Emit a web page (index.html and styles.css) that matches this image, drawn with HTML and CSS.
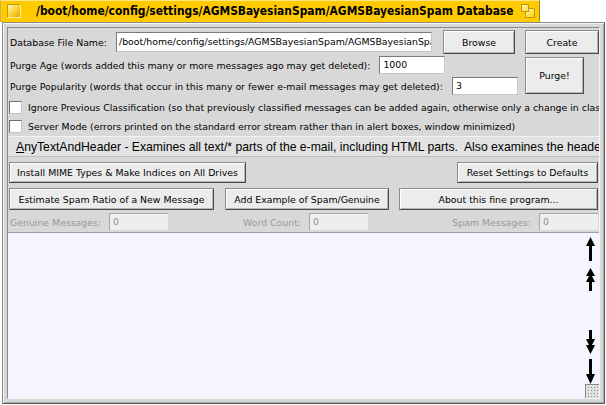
FILE: index.html
```html
<!DOCTYPE html>
<html>
<head>
<meta charset="utf-8">
<link rel="stylesheet" href="styles.css">
</head>
<body>
<div class="win">
  <div class="tab">
    <span class="close"></span>
    <span class="title">/boot/home/config/settings/AGMSBayesianSpam/AGMSBayesianSpam Database</span>
    <span class="zoom"><span class="zb"></span><span class="zs"></span></span>
  </div>
  <div class="frame">
    <div class="content">
      <div class="top">
        <div class="row r1">
          <span class="lbl">Database File Name:</span>
          <div class="tf path">/boot/home/config/settings/AGMSBayesianSpam/AGMSBayesianSpam Database</div>
          <div class="btn browse">Browse</div>
        </div>
        <div class="btn create">Create</div>
        <div class="row r2">
          <span class="lbl">Purge Age (words added this many or more messages ago may get deleted):</span>
          <div class="tf num">1000</div>
        </div>
        <div class="btn purge">Purge!</div>
        <div class="row r3">
          <span class="lbl">Purge Popularity (words that occur in this many or fewer e-mail messages may get deleted):</span>
          <div class="tf num">3</div>
        </div>
      </div>
      <div class="cb cb1"><span class="box"></span><span class="cbt">Ignore Previous Classification (so that previously classified messages can be added again, otherwise only a change in classification is allowed)</span></div>
      <div class="cb cb2"><span class="box"></span><span class="cbt">Server Mode (errors printed on the standard error stream rather than in alert boxes, window minimized)</span></div>
      <div class="menu"><span class="mtext"><u>A</u>nyTextAndHeader - Examines all text/* parts of the e-mail, including HTML parts.&nbsp; Also examines the headers.</span></div>
      <div class="brow b1">
        <div class="btn install">Install MIME Types &amp; Make Indices on All Drives</div>
        <div class="btn reset">Reset Settings to Defaults</div>
      </div>
      <div class="brow b2">
        <div class="btn estimate">Estimate Spam Ratio of a New Message</div>
        <div class="btn addex">Add Example of Spam/Genuine</div>
        <div class="btn about">About this fine program...</div>
      </div>
      <div class="stats">
        <div class="stat s1"><span class="slbl">Genuine Messages:</span><div class="tf dis">0</div></div>
        <div class="stat s2"><span class="slbl">Word Count:</span><div class="tf dis">0</div></div>
        <div class="stat s3"><span class="slbl">Spam Messages:</span><div class="tf dis">0</div></div>
      </div>
      <div class="textview">
        <div class="tvbody"></div>
        <div class="arrows">
          <svg class="a1" width="9" height="24" viewBox="0 0 9 24"><path d="M4.5 0 L9 9 L6 9 L6 24 L3 24 L3 9 L0 9 Z"/></svg>
          <svg class="a2" width="9" height="23" viewBox="0 0 9 23"><path d="M4.5 0 L9 8 L6 8 L9 14 L6 14 L6 23 L3 23 L3 14 L0 14 L3 8 L0 8 Z"/></svg>
          <svg class="a3" width="9" height="24" viewBox="0 0 9 24"><path d="M3 0 L6 0 L6 9 L9 9 L6 15 L9 15 L4.5 24 L0 15 L3 15 L0 9 L3 9 Z"/></svg>
          <svg class="a4" width="9" height="25" viewBox="0 0 9 25"><path d="M3 0 L6 0 L6 15 L9 15 L4.5 25 L0 15 L3 15 Z"/></svg>
          <div class="knob"></div>
        </div>
      </div>
    </div>
  </div>
</div>
</body>
</html>
```
FILE: styles.css
```css
* { box-sizing: border-box; }
body {
  margin: 0;
  background: #fff;
  font-family: "DejaVu Sans", sans-serif;
  font-size: 9.35px;
  color: #000;
}
.win { width: 606px; height: 405px; }

.tab {
  width: 540px;
  height: 22px;
  background: #ffcb00;
  border: 1px solid;
  border-color: #ffe680 #9a8030 #ffcb00 #c8b060;
  display: flex;
  align-items: center;
}
.close {
  flex: none;
  width: 14px;
  height: 14px;
  margin-left: 6px;
  border: 1px solid;
  border-color: #c09a00 #fff0a0 #fff0a0 #c09a00;
  background: linear-gradient(135deg, #fff6c0 0%, #ffd840 45%, #e0a800 100%);
}
.title {
  margin-left: 15px;
  font-family: "DejaVu Sans Condensed", "DejaVu Sans", sans-serif;
  font-stretch: condensed;
  font-weight: bold;
  font-size: 11.9px;
  white-space: nowrap;
  overflow: hidden;
  flex: 1;
}
.zoom {
  flex: none;
  position: relative;
  width: 14px;
  height: 14px;
  margin-right: 4px;
}
.zoom .zb {
  position: absolute;
  right: 0; bottom: 0;
  width: 10px; height: 10px;
  border: 1px solid #c09a00;
  background: linear-gradient(135deg, #fff6c0, #ffcb00);
}
.zoom .zs {
  position: absolute;
  left: 0; top: 0;
  width: 8px; height: 8px;
  border: 1px solid #c09a00;
  background: linear-gradient(135deg, #fff6c0, #ffd840);
}

.frame {
  margin-left: 2px;
  width: 603px;
  height: 382px;
  border: 1px solid;
  border-color: #8a8a8a #5a5a5a #5a5a5a #8a8a8a;
  background: #d8d8d8;
  padding: 4px;
  box-shadow: inset 1px 1px #f4f4f4, inset -1px -1px #a8a8a8;
}
.content {
  width: 100%;
  height: 100%;
  border: 1px solid;
  border-color: #8a8a8a #f4f4f4 #f4f4f4 #8a8a8a;
  background: #d8d8d8;
  display: flex;
  flex-direction: column;
}

.top {
  display: grid;
  grid-template-columns: 508px 74px;
  grid-template-rows: 24px 18px 19px;
  column-gap: 8px;
  row-gap: 2px;
  margin: 2px 0 0 1px;
}
.row { display: flex; align-items: center; }
.lbl { padding-left: 1px; white-space: nowrap; }
.r1 .lbl { flex: 1; }
.r3 { align-self: end; height: 18px; }
.r2 .tf, .r3 .tf { margin-left: 9px; }

.tf {
  flex: none;
  height: 18px;
  background: #fff;
  border: 1px solid;
  border-color: #7a7a7a #c8c8c8 #c8c8c8 #7a7a7a;
  padding: 2px 2px 0 3px;
  white-space: nowrap;
  overflow: hidden;
  line-height: 12px;
}
.path { width: 316px; height: 20px; padding-top: 3px; padding-left: 2px; margin-right: 11px; }
.num { width: 66px; }

.btn {
  flex: none;
  display: flex;
  align-items: center;
  justify-content: center;
  background: #ececec;
  border: 1px solid;
  border-color: #8c8c8c #4a4a4a #4a4a4a #8c8c8c;
  box-shadow: inset 1px 1px #fff, inset -1px -1px #b4b4b4;
  white-space: nowrap;
}
.browse { width: 72px; height: 24px; margin-right: 2px; }
.create { width: 74px; height: 24px; }
.purge { grid-row: 2 / span 2; grid-column: 2; width: 59px; height: 37px; align-self: center; }

.cb { display: flex; align-items: center; padding-left: 1px; white-space: nowrap; overflow: hidden; }
.cb1 { height: 20px; margin-top: 2px; }
.cb2 { height: 19px; }
.box {
  flex: none;
  width: 13px;
  height: 13px;
  background: #fff;
  border: 1px solid;
  border-color: #6e6e6e #c4c4c4 #c4c4c4 #6e6e6e;
}
.cbt { margin-left: 6px; }

.menu {
  height: 21px;
  background: #e2e2e2;
  border-top: 1px solid #f2f2f2;
  border-bottom: 1px solid #bcbcbc;
  display: flex;
  align-items: center;
  padding-left: 8px;
  white-space: nowrap;
  overflow: hidden;
}
.mtext {
  font-family: "Liberation Sans", Arial, sans-serif;
  font-size: 12.2px;
}

.brow { display: flex; padding: 0 1px 0 1px; }
.b1 { margin-top: 5px; height: 21px; justify-content: space-between; }
.b2 { margin-top: 5px; height: 22px; }
.install { width: 237px; }
.reset { width: 141px; }
.estimate { width: 205px; }
.addex { width: 164px; margin-left: 11px; }
.about { width: 199px; margin-left: 10px; }

.stats {
  margin-top: 3px;
  height: 18px;
  display: grid;
  grid-template-columns: 160px 200px 1fr;
  padding-left: 1px;
}
.stat { display: flex; align-items: center; }
.slbl { flex: 1; text-align: right; color: #989898; margin-right: 8px; white-space: nowrap; }
.s1 .slbl { text-align: left; padding-left: 1px; }
.tf.dis {
  width: 60px;
  background: #eeeeee;
  color: #909090;
  border-color: #a8a8a8 #d8d8d8 #d8d8d8 #a8a8a8;
}

.textview {
  flex: 1;
  margin-top: 1px;
  border-top: 1px solid #a0a0a0;
  background: #f5f5ff;
  display: flex;
}
.tvbody { flex: 1; }
.arrows {
  width: 14px;
  display: flex;
  flex-direction: column;
  align-items: flex-start;
}
.arrows svg { fill: #000; display: block; margin-left: 1px; }
.a1 { margin-top: 4px; }
.a2 { margin-top: 7px; }
.a3 { margin-top: 39px; }
.a4 { margin-top: 5px; }
.knob {
  margin-top: auto;
  width: 14px;
  height: 14px;
  border-top: 1px solid #8a8a8a;
  border-left: 1px solid #8a8a8a;
  background-color: #e0e0e0;
  background-image: radial-gradient(circle, #909090 0.6px, transparent 0.9px);
  background-size: 3px 3px;
  background-position: 1px 1px;
}
```
